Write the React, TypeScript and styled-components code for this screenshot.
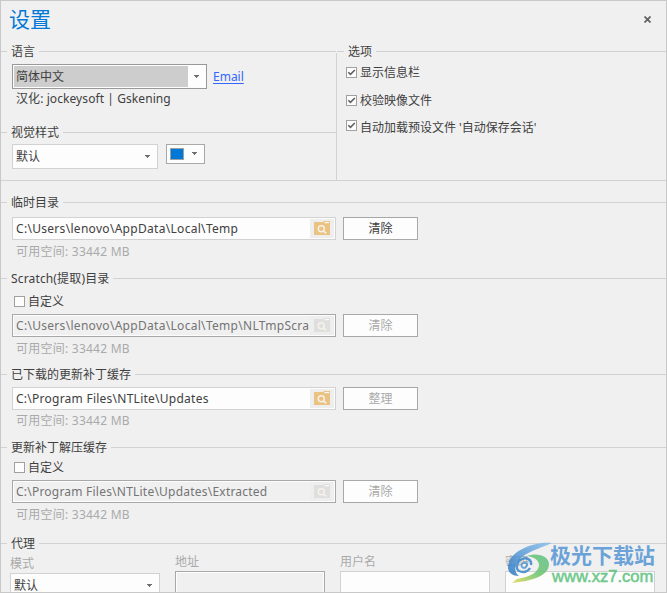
import React from "react";
import styled, { createGlobalStyle } from "styled-components";

const GlobalStyle = createGlobalStyle`
  * { box-sizing: border-box; }
  body { margin: 0; background: #f0f0f0; }
`;

const Window = styled.div`
  position: relative;
  width: 667px;
  height: 593px;
  overflow: hidden;
  border: 1px solid #c8c8c8;
  background: #f0f0f0;
  color: #404040;
  font-family: "Noto Sans", "Noto Sans CJK SC", sans-serif;
  font-size: 12px;
  line-height: 17px;
  white-space: nowrap;
`;

const TitleBar = styled.header`
  display: flex;
  justify-content: space-between;
  height: 42px;
  padding: 4px 15px 0 8px;
`;

const Title = styled.h1`
  margin: -1px 0 0;
  font-size: 21px;
  line-height: 30px;
  font-weight: 400;
  color: #0078d7;
`;

const CloseButton = styled.button`
  display: flex;
  width: 7px;
  height: 7px;
  margin-top: 11px;
  padding: 0;
  border: 0;
  background: none;
`;

const TopSection = styled.div`
  display: flex;
  height: 138px;
  margin-bottom: 13px;
  border-bottom: 1px solid #d2d2d2;
`;

const LeftColumn = styled.div`
  display: flex;
  flex-direction: column;
  width: 335px;
`;

const Divider = styled.div`
  width: 1px;
  height: 127px;
  margin-top: 10px;
  background: #d2d2d2;
`;

const RightColumn = styled.div`
  flex: 1;
`;

const Group = styled.section<{ $height: number }>`
  height: ${(p) => p.$height}px;
`;

const Legend = styled.div<{ $spacing?: number; $lead?: number }>`
  display: flex;
  align-items: center;
  height: 17px;
  letter-spacing: ${(p) => p.$spacing ?? 0}px;
  &::before { content: ""; width: ${(p) => p.$lead ?? 6}px; height: 1px; background: #d2d2d2; }
  &::after { content: ""; flex: 1; height: 1px; background: #d2d2d2; }
  span { padding: 0 4px; }
`;

const Row = styled.div<{ $top?: number }>`
  display: flex;
  align-items: flex-start;
  margin-top: ${(p) => p.$top ?? 0}px;
  padding-left: 11px;
`;

const Select = styled.div<{ $width: number; $strong?: boolean }>`
  display: flex;
  align-items: stretch;
  width: ${(p) => p.$width}px;
  height: 25px;
  padding: 1px;
  border: 1px solid ${(p) => (p.$strong ? "#999" : "#d2d2d2")};
  background: #fdfdfd;
`;

const SelectValue = styled.div<{ $filled?: boolean }>`
  flex: 1;
  padding-left: 2px;
  line-height: 22px;
  background: ${(p) => (p.$filled ? "#cdcdcd" : "transparent")};
`;

const ArrowCell = styled.div`
  display: flex;
  align-items: center;
  justify-content: center;
  width: 17px;
`;

const ColorPicker = styled.div`
  display: flex;
  align-items: center;
  width: 39px;
  height: 20px;
  margin-left: 8px;
  padding-left: 3px;
  border: 1px solid #a8a8a8;
  background: #fdfdfd;
`;

const Swatch = styled.div`
  width: 14px;
  height: 12px;
  margin-right: 2px;
  border: 1px solid #a0a0a0;
  background: #0078d7;
`;

const EmailLink = styled.a`
  margin: 4px 0 0 6px;
  color: #3366ff;
  text-decoration: underline;
  text-underline-offset: 2px;
`;

const Note = styled.div<{ $top: number; $muted?: boolean; $spacing?: number }>`
  margin-top: ${(p) => p.$top}px;
  padding-left: 15px;
  letter-spacing: ${(p) => p.$spacing ?? 0}px;
  color: ${(p) => (p.$muted ? "#aaa" : "inherit")};
`;

const CheckRow = styled.label<{ $top: number; $left: number; $shift?: number }>`
  display: flex;
  height: 17px;
  margin-top: ${(p) => p.$top}px;
  padding-left: ${(p) => p.$left}px;
  span { margin: ${(p) => p.$shift ?? 0}px 0 0 3px; }
`;

const CheckBox = styled.i`
  display: flex;
  width: 11px;
  height: 11px;
  margin-top: 3px;
  border: 1px solid #a0a0a0;
  background: #fdfdfd;
`;

const PathField = styled.div<{ $disabled?: boolean }>`
  display: flex;
  width: 324px;
  height: 23px;
  padding: 1px;
  border: 1px solid ${(p) => (p.$disabled ? "#a8a8a8" : "#d2d2d2")};
  background: #fdfdfd;
  color: ${(p) => (p.$disabled ? "#747474" : "#404040")};
`;

const PathText = styled.div<{ $disabled?: boolean; $spacing: number }>`
  flex: 1;
  min-width: 0;
  overflow: hidden;
  padding-left: 2px;
  line-height: 20px;
  letter-spacing: ${(p) => p.$spacing}px;
  background: ${(p) => (p.$disabled ? "#f0f0f0" : "transparent")};
`;

const BrowseButton = styled.div`
  display: flex;
  width: 24px;
  padding: 2px 0 0 4px;
  background: #eee;
`;

const Button = styled.button<{ $disabled?: boolean }>`
  width: 75px;
  height: 23px;
  margin-left: 7px;
  padding: 0;
  border: 1px solid #a8a8a8;
  background: #fdfdfd;
  color: ${(p) => (p.$disabled ? "#aaa" : "#404040")};
  font: inherit;
  line-height: 21px;
`;

const ProxyRow = styled.div`
  display: flex;
  gap: 15px;
  padding-left: 9px;
`;

const ProxyField = styled.div<{ $top?: number }>`
  display: flex;
  flex-direction: column;
  gap: 1px;
  width: 150px;
  padding-top: ${(p) => p.$top ?? 1}px;
  color: #aaa;
`;

const ProxyInput = styled.div<{ $disabled?: boolean }>`
  height: 25px;
  border: 1px solid ${(p) => (p.$disabled ? "#a8a8a8" : "#d2d2d2")};
  background: ${(p) => (p.$disabled ? "#f0f0f0" : "#fdfdfd")};
  box-shadow: inset 0 0 0 1px #fdfdfd;
`;

const Dark = styled.div`
  color: #404040;
`;

const Watermark = styled.div`
  position: absolute;
  left: 504px;
  top: 540px;
  display: flex;
  pointer-events: none;
  opacity: 0.85;
`;

const WatermarkText = styled.div`
  margin-left: -3px;
`;

const WatermarkName = styled.div`
  font: 700 21px/26px "Noto Sans CJK SC", sans-serif;
  color: #5496d4;
`;

const WatermarkUrl = styled.div`
  padding-left: 2px;
  font: 400 16.6px/19px "Liberation Sans", sans-serif;
  color: #55c077;
  -webkit-text-stroke: 0.5px #55c077;
`;

const Arrow = () => (
  <svg width="5" height="4" viewBox="0 0 5 4" shapeRendering="crispEdges">
    <path d="M0 0h5v1h-1v1h-1v1h-1v-1h-1v-1h-1z" fill="#707070" />
  </svg>
);

const Check = () => (
  <svg width="9" height="9" viewBox="0 0 9 9">
    <path d="M1.3 4.2 3.5 6.4 7.8 2" fill="none" stroke="#606060" strokeWidth="1.6" />
  </svg>
);

const FolderSearch = ({ disabled }: { disabled?: boolean }) => (
  <svg width="16" height="14" viewBox="0 0 16 14">
    <path d="M0 1h9l1-1h6v14H0z" fill={disabled ? "#dfdfdf" : "#eac282"} />
    <path d="M10.5 1.6h4.5" stroke="#fafafa" strokeWidth="1.2" />
    <circle cx="7.3" cy="7.8" r="3" fill="none" stroke="#f7f3ea" strokeWidth="1.4" />
    <path d="m9.5 10 2.7 2.4" stroke="#f7f3ea" strokeWidth="1.6" />
  </svg>
);

const Logo = () => (
  <svg width="48" height="44" viewBox="0 0 48 44">
    <defs>
      <linearGradient id="swooshBlue" x1="0" y1="1" x2="1" y2="0">
        <stop offset="0" stopColor="#2878c4" />
        <stop offset="1" stopColor="#8cc0ea" />
      </linearGradient>
      <linearGradient id="swooshGreen" x1="0" y1="1" x2="1" y2="0">
        <stop offset="0" stopColor="#e2d84e" />
        <stop offset="0.5" stopColor="#6cc46e" />
        <stop offset="1" stopColor="#5cc088" />
      </linearGradient>
    </defs>
    <path d="M47 2C30 0 3 10 3 26c0 6 5 9 11 9-5-4-5-10 0-16C21 11 33 8 47 2z" fill="url(#swooshBlue)" />
    <path d="M22 15c10-4 22 0 22 8 0 12-17 17-37 19l5-4c13-2 22-7 22-14 0-5-5-8-12-9z" fill="url(#swooshGreen)" />
    <path d="M26 24c1-5-4-8-9-6-5 2-7 9-3 12 4 2 9 1 11-3" fill="none" stroke="#3b88cd" strokeWidth="2.4" />
    <path d="M22 24c0-3-4-3-5-1-2 3 2 5 4 3z" fill="none" stroke="#4b97d6" strokeWidth="1.8" />
  </svg>
);

type DirectoryProps = {
  title: string;
  height: number;
  path: string;
  action: string;
  custom?: boolean;
  fieldTop: number;
  checkTop?: number;
  hintTop: number;
  spacing: number;
  legendSpacing?: number;
  actionDisabled?: boolean;
};

const Directory = (p: DirectoryProps) => (
  <Group $height={p.height}>
    <Legend $spacing={p.legendSpacing}><span>{p.title}</span></Legend>
    {p.custom && (
      <CheckRow $top={p.checkTop ?? 0} $left={13}>
        <CheckBox /><span>自定义</span>
      </CheckRow>
    )}
    <Row $top={p.fieldTop}>
      <PathField $disabled={p.custom}>
        <PathText $disabled={p.custom} $spacing={p.spacing}>{p.path}</PathText>
        <BrowseButton><FolderSearch disabled={p.custom} /></BrowseButton>
      </PathField>
      <Button $disabled={p.actionDisabled}>{p.action}</Button>
    </Row>
    <Note $top={p.hintTop} $muted $spacing={0.24}>可用空间: 33442 MB</Note>
  </Group>
);

export default function App() {
  return (
    <>
      <GlobalStyle />
      <Window>
        <TitleBar>
          <Title>设置</Title>
          <CloseButton aria-label="关闭">
            <svg width="7" height="7" viewBox="0 0 7 7">
              <path d="M.5.5l6 6M6.5.5l-6 6" stroke="#606060" strokeWidth="1.7" />
            </svg>
          </CloseButton>
        </TitleBar>
        <TopSection>
          <LeftColumn>
            <Group $height={81}>
              <Legend><span>语言</span></Legend>
              <Row $top={4}>
                <Select $width={195} $strong>
                  <SelectValue $filled>简体中文</SelectValue>
                  <ArrowCell><Arrow /></ArrowCell>
                </Select>
                <EmailLink>Email</EmailLink>
              </Row>
              <Note $top={1} $spacing={0.08}>汉化: jockeysoft | Gskening</Note>
            </Group>
            <Group $height={56}>
              <Legend><span>视觉样式</span></Legend>
              <Row $top={3}>
                <Select $width={146}>
                  <SelectValue>默认</SelectValue>
                  <ArrowCell><Arrow /></ArrowCell>
                </Select>
                <ColorPicker>
                  <Swatch />
                  <ArrowCell><Arrow /></ArrowCell>
                </ColorPicker>
              </Row>
            </Group>
          </LeftColumn>
          <Divider />
          <RightColumn>
            <Legend $lead={7}><span>选项</span></Legend>
            <CheckRow $top={4} $left={9}><CheckBox><Check /></CheckBox><span>显示信息栏</span></CheckRow>
            <CheckRow $top={11} $left={9}><CheckBox><Check /></CheckBox><span>校验映像文件</span></CheckRow>
            <CheckRow $top={8} $left={9} $shift={2}>
              <CheckBox><Check /></CheckBox><span>自动加载预设文件 '自动保存会话'</span>
            </CheckRow>
          </RightColumn>
        </TopSection>
        <Directory title="临时目录" height={76} fieldTop={6} hintTop={3} spacing={0.3} path="C:\Users\lenovo\AppData\Local\Temp" action="清除" />
        <Directory title="Scratch(提取)目录" legendSpacing={0.15} height={96} custom checkTop={6} fieldTop={4} hintTop={3} spacing={0.3} path="C:\Users\lenovo\AppData\Local\Temp\NLTmpScra" action="清除" actionDisabled />
        <Directory title="已下载的更新补丁缓存" height={73} fieldTop={4} hintTop={2} spacing={0.25} path="C:\Program Files\NTLite\Updates" action="整理" actionDisabled />
        <Directory title="更新补丁解压缓存" height={96} custom checkTop={3} fieldTop={4} hintTop={3} spacing={0.22} path="C:\Program Files\NTLite\Updates\Extracted" action="清除" actionDisabled />
        <Group $height={58}>
          <Legend><span>代理</span></Legend>
          <ProxyRow>
            <ProxyField $top={3}>
              <span>模式</span>
              <Dark>
                <Select $width={150}>
                  <SelectValue>默认</SelectValue>
                  <ArrowCell><Arrow /></ArrowCell>
                </Select>
              </Dark>
            </ProxyField>
            <ProxyField><span>地址</span><ProxyInput $disabled /></ProxyField>
            <ProxyField><span>用户名</span><ProxyInput /></ProxyField>
            <ProxyField><span>密码</span><ProxyInput /></ProxyField>
          </ProxyRow>
        </Group>
        <Watermark>
          <Logo />
          <WatermarkText>
            <WatermarkName>极光下载站</WatermarkName>
            <WatermarkUrl>www.xz7.com</WatermarkUrl>
          </WatermarkText>
        </Watermark>
      </Window>
    </>
  );
}
